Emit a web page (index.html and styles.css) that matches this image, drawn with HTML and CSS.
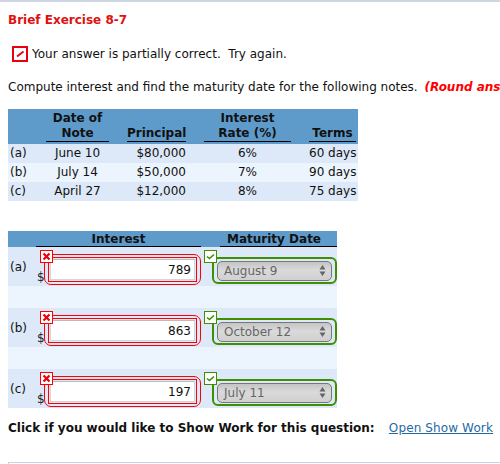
FILE: index.html
```html
<!DOCTYPE html>
<html lang="en">
<head>
  <meta charset="UTF-8" />
  <meta name="viewport" content="width=device-width, initial-scale=1" />
  <title>Brief Exercise 8-7</title>
  <link rel="stylesheet" href="styles.css">
</head>
<body>
  <div class="top-rule"></div>
  <h1>Brief Exercise 8-7</h1>

  <p class="feedback">
    <span class="partial-icon">
      <svg width="10" height="10" viewBox="0 0 10 10"><path d="M2 7.5 8.5 2.5" stroke="#e8000d" stroke-width="1.8" fill="none"/></svg>
    </span>
    <span>Your answer is partially correct.&nbsp; Try again.</span>
  </p>

  <p class="instructions">Compute interest and find the maturity date for the following notes. <em>(Round ans</em></p>

  <div class="notes">
    <div class="notes-row notes-head">
      <span></span>
      <span class="center">Date of<br>Note</span>
      <span class="right">Principal</span>
      <span class="center">Interest<br>Rate (%)</span>
      <span class="center">Terms</span>
    </div>
    <div class="notes-row">
      <span class="label">(a)</span><span class="center">June 10</span><span class="right">$80,000</span><span class="center">6%</span><span class="right">60 days</span>
    </div>
    <div class="notes-row alt">
      <span class="label">(b)</span><span class="center">July 14</span><span class="right">$50,000</span><span class="center">7%</span><span class="right">90 days</span>
    </div>
    <div class="notes-row">
      <span class="label">(c)</span><span class="center">April 27</span><span class="right">$12,000</span><span class="center">8%</span><span class="right">75 days</span>
    </div>
  </div>

  <div class="answers">
    <div class="answers-head">
      <span class="head-interest">Interest</span>
      <span class="head-date">Maturity Date</span>
    </div>

    <div class="answer-row">
      <span class="label">(a)</span>
      <span class="dollar">$</span>
      <div class="wrong-outer">
        <span class="badge badge-x"><svg width="9" height="9" viewBox="0 0 9 9"><path d="M1.5 1.5 7.5 7.5M7.5 1.5 1.5 7.5" stroke="#e8000d" stroke-width="2.2"/></svg></span>
        <div class="wrong-inner"><input type="text" value="789"></div>
      </div>
      <div class="right-outer">
        <span class="badge badge-check"><svg width="9" height="9" viewBox="0 0 9 9"><path d="M1 4.5 3.5 6.5 8 2.5" stroke="#3f8f00" stroke-width="1.6" fill="none"/></svg></span>
        <div class="select"><span>August 9</span><svg width="7" height="13" viewBox="0 0 7 13"><path d="M3.5 1 6.5 5.5H.5ZM3.5 12 .5 7.5H6.5Z" fill="#666"/></svg></div>
      </div>
    </div>
    <div class="spacer"></div>

    <div class="answer-row">
      <span class="label">(b)</span>
      <span class="dollar">$</span>
      <div class="wrong-outer">
        <span class="badge badge-x"><svg width="9" height="9" viewBox="0 0 9 9"><path d="M1.5 1.5 7.5 7.5M7.5 1.5 1.5 7.5" stroke="#e8000d" stroke-width="2.2"/></svg></span>
        <div class="wrong-inner"><input type="text" value="863"></div>
      </div>
      <div class="right-outer">
        <span class="badge badge-check"><svg width="9" height="9" viewBox="0 0 9 9"><path d="M1 4.5 3.5 6.5 8 2.5" stroke="#3f8f00" stroke-width="1.6" fill="none"/></svg></span>
        <div class="select"><span>October 12</span><svg width="7" height="13" viewBox="0 0 7 13"><path d="M3.5 1 6.5 5.5H.5ZM3.5 12 .5 7.5H6.5Z" fill="#666"/></svg></div>
      </div>
    </div>
    <div class="spacer"></div>

    <div class="answer-row">
      <span class="label">(c)</span>
      <span class="dollar">$</span>
      <div class="wrong-outer">
        <span class="badge badge-x"><svg width="9" height="9" viewBox="0 0 9 9"><path d="M1.5 1.5 7.5 7.5M7.5 1.5 1.5 7.5" stroke="#e8000d" stroke-width="2.2"/></svg></span>
        <div class="wrong-inner"><input type="text" value="197"></div>
      </div>
      <div class="right-outer">
        <span class="badge badge-check"><svg width="9" height="9" viewBox="0 0 9 9"><path d="M1 4.5 3.5 6.5 8 2.5" stroke="#3f8f00" stroke-width="1.6" fill="none"/></svg></span>
        <div class="select"><span>July 11</span><svg width="7" height="13" viewBox="0 0 7 13"><path d="M3.5 1 6.5 5.5H.5ZM3.5 12 .5 7.5H6.5Z" fill="#666"/></svg></div>
      </div>
    </div>
  </div>

  <div class="show-work">
    <strong>Click if you would like to Show Work for this question:</strong>
    <a href="#">Open Show Work</a>
  </div>

  <div class="bottom-rule"></div>
</body>
</html>
```

FILE: styles.css
```css
* {
  box-sizing: border-box;
}

html,
body {
  height: 464px;
  overflow: hidden;
}

body {
  margin: 0;
  background: white;
  color: #111;
  font-family: "DejaVu Sans", Verdana, sans-serif;
  font-size: 12px;
  line-height: 16px;
}

.top-rule {
  height: 2px;
  background: #cdd6e2;
}

h1 {
  margin: 10px 0 0 8px;
  color: #e01010;
  font-size: 12px;
  line-height: 16px;
  font-weight: bold;
}

.feedback {
  display: flex;
  align-items: center;
  gap: 4px;
  margin: 18px 0 0 12px;
  height: 16px;
}

.partial-icon {
  display: flex;
  align-items: center;
  justify-content: center;
  width: 16px;
  height: 16px;
  border: 2px solid #e8000d;
}

.instructions {
  margin: 17px 0 0 8px;
  white-space: nowrap;
}

.instructions em {
  margin-left: 3px;
  color: #f00;
  font-weight: bold;
  font-style: italic;
}

/* notes table */
.notes {
  width: 350px;
  margin: 14px 0 0 8px;
}

.notes-row {
  display: grid;
  grid-template-columns: 20px 63px 59px 87px 47px;
  column-gap: 18px;
  height: 19px;
  padding-right: 2px;
  background: #dde9f8;
  line-height: 19px;
  white-space: nowrap;
}

.notes-row.alt {
  background: #ecf4fe;
}

.notes-head {
  align-items: end;
  height: 35px;
  background: #5f9bca;
  font-weight: bold;
  line-height: 15px;
}

.notes-head span:not(:first-child) {
  border-bottom: 1px solid #000;
}

.notes-head span {
  margin-bottom: 2px;
}

.center {
  text-align: center;
}

.right {
  text-align: right;
}

.label {
  padding-left: 2px;
}

/* answers table */
.answers {
  width: 329px;
  margin: 30px 0 0 8px;
}

.answers-head {
  display: flex;
  height: 16px;
  background: #5f9bca;
  font-weight: bold;
  line-height: 17px;
}

.head-interest {
  width: 165px;
  margin-left: 28px;
  border-bottom: 1px solid #000;
  text-align: center;
}

.head-date {
  width: 117px;
  margin-left: 19px;
  padding-right: 9px;
  border-bottom: 1px solid #000;
  text-align: center;
}

.answer-row {
  display: flex;
  height: 39px;
  background: #dde9f8;
}

.answer-row .label {
  width: 29px;
  margin-top: 12px;
}

.spacer {
  height: 22px;
  background: #ecf4fe;
}

.dollar {
  width: 7px;
  margin-top: 22px;
  color: #222;
}

.wrong-outer {
  position: relative;
  width: 157px;
  height: 31px;
  margin-top: 7px;
  padding: 2px;
  border: 1px solid #f00;
  border-radius: 7px;
}

.wrong-inner {
  height: 25px;
  margin: 0 1px;
  padding: 1px;
  border: 1px solid #f00;
}

.wrong-inner input {
  display: block;
  width: 100%;
  height: 21px;
  padding: 0 3px 0 0;
  border: 1px solid #d2d6da;
  border-top-color: #bbb;
  background: white;
  color: #111;
  font: 12px "DejaVu Sans", Verdana, sans-serif;
  text-align: right;
}

.right-outer {
  position: relative;
  display: flex;
  align-items: center;
  width: 125px;
  height: 27px;
  margin: 10px 0 0 11px;
  padding: 0 3px;
  border: 2px solid #3f8f00;
  border-radius: 6px;
}

.select {
  display: flex;
  align-items: center;
  justify-content: space-between;
  width: 117px;
  height: 20px;
  padding: 0 5px 0 6px;
  border: 1px solid #777;
  border-radius: 5px;
  background: linear-gradient(#c4c4c4, #dadada 45%, #d0d0d0);
  color: #666;
}

.badge {
  position: absolute;
  display: flex;
  align-items: center;
  justify-content: center;
  width: 13px;
  height: 13px;
  background: white;
}

.badge-x {
  top: -5px;
  left: -5px;
  border: 1px solid #f00;
}

.badge-check {
  top: -9px;
  left: -10px;
  border: 1px solid #3f8f00;
}

.show-work {
  display: flex;
  justify-content: space-between;
  width: 485px;
  margin: 12px 0 0 8px;
}

.show-work a {
  color: #1f6aa5;
  letter-spacing: 0.12px;
}

.bottom-rule {
  height: 10px;
  margin: 26px 0 0 8px;
  border-top: 1px solid #c8d2e2;
  border-left: 1px solid #c8d2e2;
}
```
